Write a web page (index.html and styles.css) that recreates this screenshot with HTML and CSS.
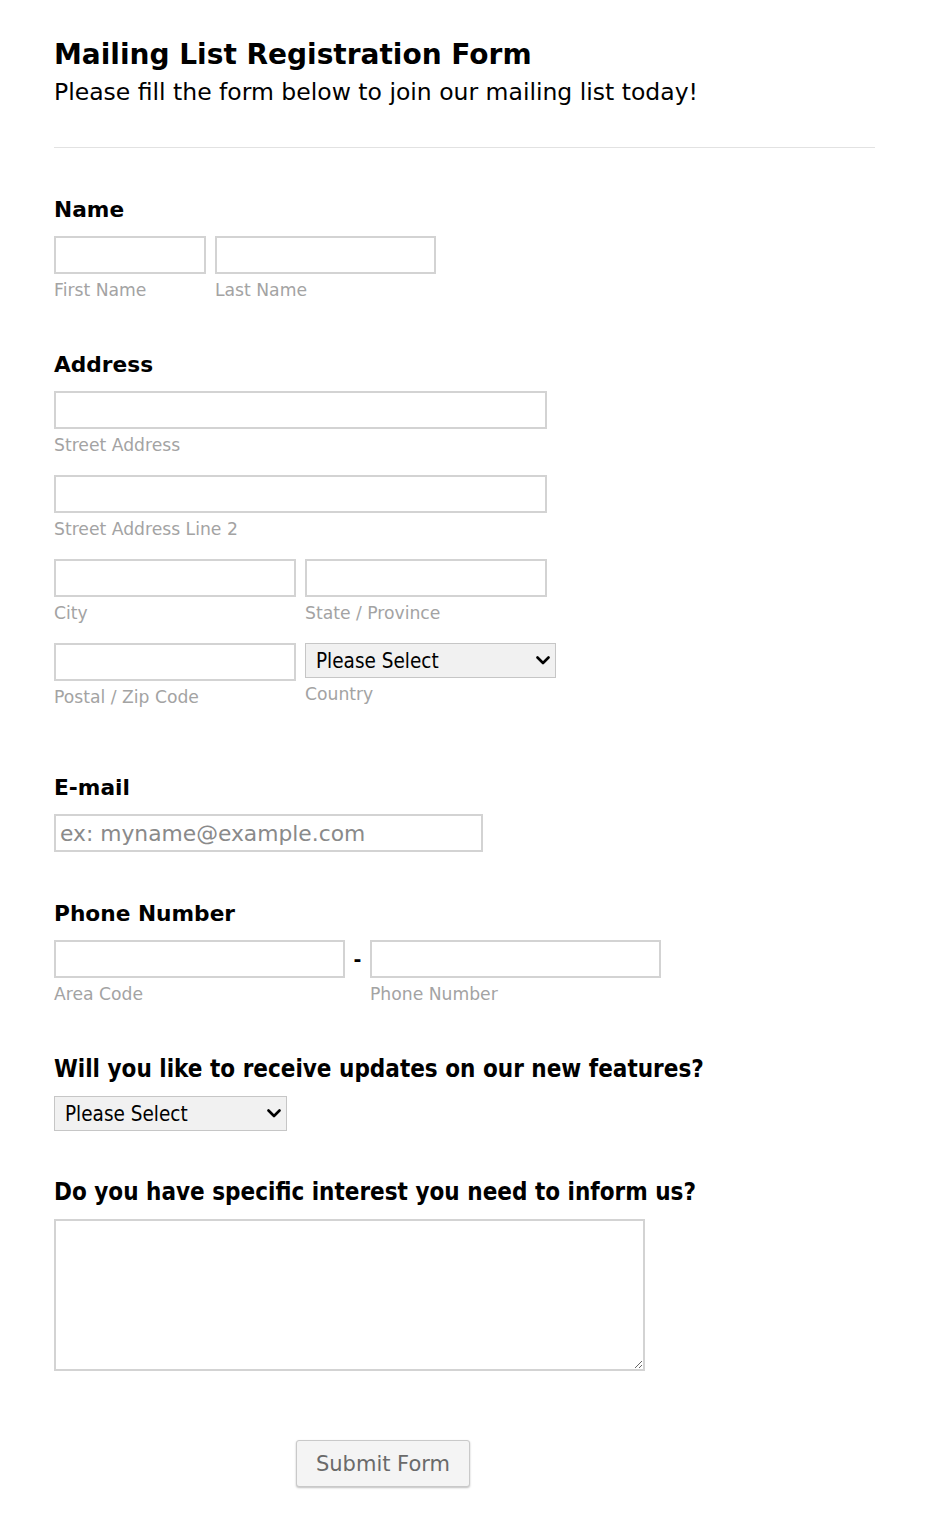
FILE: index.html
```html
<!DOCTYPE html>
<html>
<head>
<meta charset="utf-8">
<link rel="stylesheet" href="styles.css">
</head>
<body>
<form class="form">
  <div class="header">
    <h1 class="title">Mailing List Registration Form</h1>
    <p class="subtitle">Please fill the form below to join our mailing list today!</p>
  </div>
  <div class="divider"></div>

  <div class="section sec-name">
    <div class="label">Name</div>
    <div class="row">
      <div class="field"><input class="inp w-first" type="text"><div class="sub">First Name</div></div>
      <div class="field"><input class="inp w-last" type="text"><div class="sub">Last Name</div></div>
    </div>
  </div>

  <div class="section sec-address">
    <div class="label">Address</div>
    <div class="field"><input class="inp w-full" type="text"><div class="sub">Street Address</div></div>
    <div class="field gap"><input class="inp w-full" type="text"><div class="sub">Street Address Line 2</div></div>
    <div class="row gap">
      <div class="field"><input class="inp w-half" type="text"><div class="sub">City</div></div>
      <div class="field"><input class="inp w-half" type="text"><div class="sub">State / Province</div></div>
    </div>
    <div class="row gap">
      <div class="field"><input class="inp w-half" type="text"><div class="sub">Postal / Zip Code</div></div>
      <div class="field">
        <div class="sel-wrap">
          <select class="sel w-country"><option>Please Select</option></select>
          <svg class="chev" width="14" height="9" viewBox="0 0 14 9"><path d="M1.5 1.5 L7 7 L12.5 1.5" fill="none" stroke="#000" stroke-width="2.6" stroke-linecap="round" stroke-linejoin="round"/></svg>
        </div>
        <div class="sub">Country</div>
      </div>
    </div>
  </div>

  <div class="section sec-email">
    <div class="label">E-mail</div>
    <input class="inp w-email" type="text" placeholder="ex: myname@example.com">
  </div>

  <div class="section sec-phone">
    <div class="label">Phone Number</div>
    <div class="row phone-row">
      <div class="field"><input class="inp w-area" type="text"><div class="sub">Area Code</div></div>
      <span class="dash">-</span>
      <div class="field"><input class="inp w-phone" type="text"><div class="sub">Phone Number</div></div>
    </div>
  </div>

  <div class="section sec-q1">
    <div class="label q">Will you like to receive updates on our new features?</div>
    <div class="sel-wrap">
      <select class="sel w-q1"><option>Please Select</option></select>
      <svg class="chev" width="14" height="9" viewBox="0 0 14 9"><path d="M1.5 1.5 L7 7 L12.5 1.5" fill="none" stroke="#000" stroke-width="2.6" stroke-linecap="round" stroke-linejoin="round"/></svg>
    </div>
  </div>

  <div class="section sec-q2">
    <div class="label q">Do you have specific interest you need to inform us?</div>
    <textarea class="area"></textarea>
  </div>

  <div class="actions">
    <button type="button" class="btn">Submit Form</button>
  </div>
</form>
</body>
</html>
```

FILE: styles.css
```css
html, body {
  margin: 0;
  padding: 0;
  background: #ffffff;
}
body {
  font-family: "DejaVu Sans", Verdana, sans-serif;
  color: #000;
}
.form {
  padding: 39px 56px 40px 54px;
}
.title {
  margin: 0;
  font-size: 28px;
  line-height: 32px;
  font-weight: bold;
}
.subtitle {
  margin: 7px 0 0 0;
  font-size: 23.5px;
  line-height: 28px;
}
.divider {
  margin-top: 41px;
  height: 0;
  border-top: 1px solid #e2e2e2;
  width: 821px;
}
.section {
  display: flex;
  flex-direction: column;
  align-items: flex-start;
}
.sec-name { margin-top: 49px; }
.sec-address { margin-top: 52px; }
.sec-email { margin-top: 68px; }
.sec-phone { margin-top: 49px; }
.sec-q1 { margin-top: 51px; }
.sec-q2 { margin-top: 47px; }
.label {
  font-size: 21.7px;
  line-height: 26px;
  font-weight: bold;
  margin-bottom: 13px;
}
.label.q {
  font-family: "DejaVu Sans Condensed", "DejaVu Sans", sans-serif;
  font-stretch: condensed;
  font-size: 24px;
  line-height: 28px;
}
.row {
  display: flex;
  gap: 9px;
  align-items: flex-start;
}
.field {
  display: flex;
  flex-direction: column;
}
.gap { margin-top: 20px; }
.inp {
  box-sizing: border-box;
  height: 38px;
  border: 2px solid #d3d3d3;
  background: #fff;
  margin: 0;
  padding: 0 4px;
  font-family: "DejaVu Sans", sans-serif;
  font-size: 21.8px;
  outline: none;
}
.inp::placeholder {
  color: #8a8a8a;
}
.w-first { width: 152px; }
.w-last { width: 221px; }
.w-full { width: 493px; }
.w-half { width: 242px; }
.w-email { width: 429px; }
.w-area { width: 291px; }
.w-phone { width: 291px; }
.sub {
  margin-top: 6px;
  font-size: 17.2px;
  line-height: 20px;
  color: #a3a3a3;
}
.sel-wrap {
  position: relative;
  display: flex;
}
.sel {
  -webkit-appearance: none;
  appearance: none;
  box-sizing: border-box;
  height: 35px;
  margin: 0;
  border: 1px solid #c6c6c6;
  border-radius: 0;
  background-color: #f1f1f1;
  color: #000;
  font-family: "DejaVu Sans Condensed", "DejaVu Sans", sans-serif;
  font-stretch: condensed;
  font-size: 20.5px;
  padding: 0 24px 0 10px;
  outline: none;
}
.chev {
  position: absolute;
  right: 6px;
  top: 13px;
  pointer-events: none;
}
.w-country { width: 251px; }
.w-q1 { width: 233px; }
.phone-row { gap: 0; }
.dash {
  width: 25px;
  text-align: center;
  font-size: 19px;
  font-weight: bold;
  line-height: 38px;
}
.area {
  box-sizing: border-box;
  width: 591px;
  height: 152px;
  border: 2px solid #d3d3d3;
  margin: 0;
  padding: 4px;
  resize: both;
  outline: none;
}
.actions {
  margin-top: 69px;
  padding-left: 242px;
}
.btn {
  box-sizing: border-box;
  width: 174px;
  height: 47px;
  background: #f4f4f4;
  border: 1px solid #c9c9c9;
  border-radius: 3px;
  box-shadow: 0 1px 2px rgba(0, 0, 0, 0.25);
  color: #6a6a6a;
  font-family: "DejaVu Sans", sans-serif;
  font-size: 21px;
  padding: 0;
}
```
